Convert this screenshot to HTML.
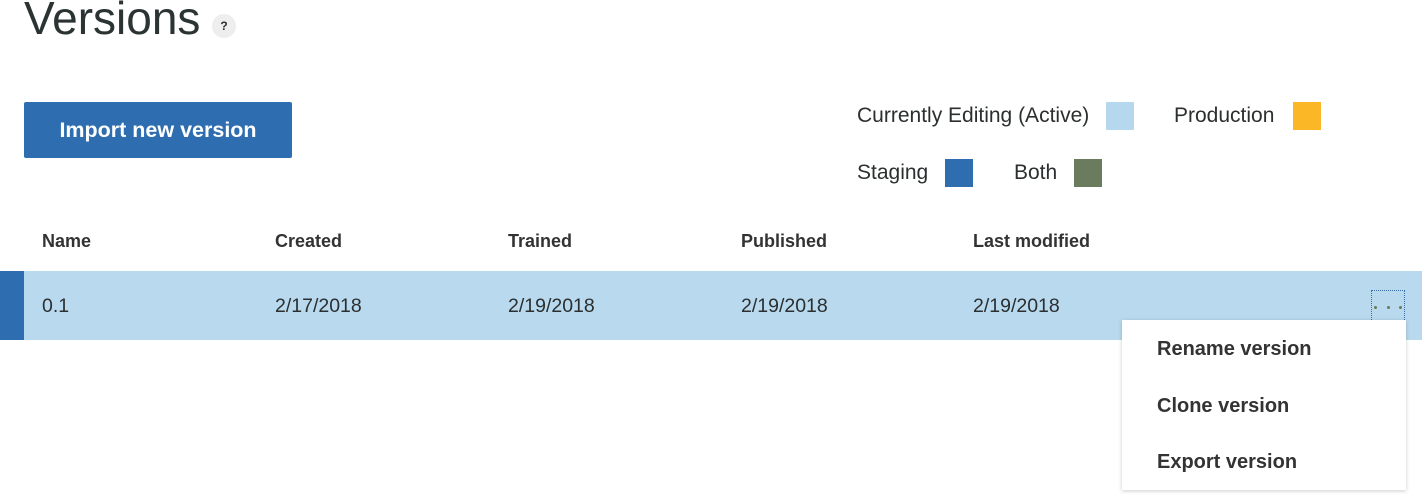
<!DOCTYPE html>
<html><head><meta charset="utf-8"><style>
body{margin:0;width:1425px;height:500px;background:#fff;position:relative;overflow:hidden;font-family:"Liberation Sans",sans-serif;color:#2b2f2f}
.a{position:absolute;white-space:nowrap}
.sw{position:absolute;width:28px;height:28px}
.h{font-size:18px;font-weight:bold;color:#333;top:231px}
.c{font-size:19.5px;top:295px;color:#2b2f2f}
.m{font-size:20px;font-weight:bold;color:#333;left:1157px}
.l{font-size:21px;color:#2b2f2f}
.d{position:absolute;width:3px;height:3px;border-radius:50%;background:#6b7b5e;top:306px}
</style></head><body>
<div class="a" style="left:24px;top:-9px;font-size:46px;color:#2b3333">Versions</div>
<div class="a" style="left:212px;top:14px;width:24px;height:24px;border-radius:50%;background:#eee;font-size:12px;font-weight:bold;text-align:center;line-height:24px">?</div>
<div class="a" style="left:24px;top:102px;width:268px;height:56px;background:#2e6db0;border-radius:2px;color:#fff;font-size:21.5px;font-weight:bold;text-align:center;line-height:56px">Import new version</div>
<div class="a l" style="left:857px;top:104px">Currently Editing (Active)</div>
<div class="sw" style="left:1106px;top:102px;background:#b6d8ee"></div>
<div class="a l" style="left:1174px;top:104px">Production</div>
<div class="sw" style="left:1293px;top:102px;background:#fbb725"></div>
<div class="a l" style="left:857px;top:161px">Staging</div>
<div class="sw" style="left:945px;top:159px;background:#2e6db0"></div>
<div class="a l" style="left:1014px;top:161px">Both</div>
<div class="sw" style="left:1074px;top:159px;background:#6b7b5e"></div>
<div class="a h" style="left:42px">Name</div>
<div class="a h" style="left:275px">Created</div>
<div class="a h" style="left:508px">Trained</div>
<div class="a h" style="left:741px">Published</div>
<div class="a h" style="left:973px">Last modified</div>
<div class="a" style="left:0;top:271px;width:1422px;height:69px;background:#b8d9ee"></div>
<div class="a" style="left:0;top:271px;width:24px;height:69px;background:#2e6db0"></div>
<div class="a c" style="left:42px">0.1</div>
<div class="a c" style="left:275px">2/17/2018</div>
<div class="a c" style="left:508px">2/19/2018</div>
<div class="a c" style="left:741px">2/19/2018</div>
<div class="a c" style="left:973px">2/19/2018</div>
<div class="a" style="left:1371px;top:290px;width:34px;height:34px;border:1px dotted #3a6ea8;border-bottom:none;box-sizing:border-box"></div>
<div class="d" style="left:1374px"></div><div class="d" style="left:1387px"></div><div class="d" style="left:1399px"></div>
<div class="a" style="left:1122px;top:320px;width:284px;height:170px;background:#fff;box-shadow:0 1px 4px rgba(0,0,0,.2)"></div>
<div class="a m" style="top:338px">Rename version</div>
<div class="a m" style="top:395px">Clone version</div>
<div class="a m" style="top:451px">Export version</div>
</body></html>
